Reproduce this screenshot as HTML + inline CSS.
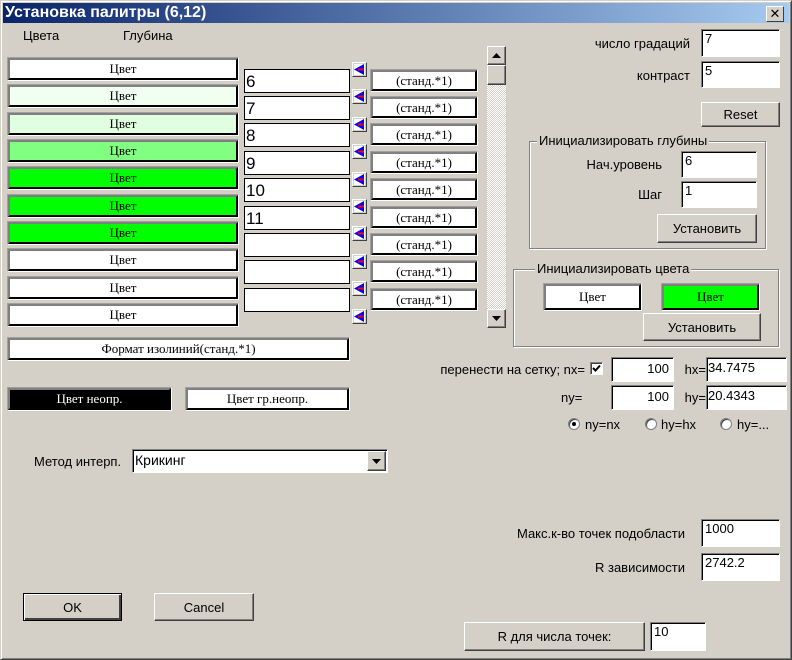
<!DOCTYPE html>
<html><head><meta charset="utf-8"><style>
*{box-sizing:border-box;margin:0;padding:0}
body{width:792px;height:660px;overflow:hidden;background:#d4d0c8;font-family:"Liberation Sans","DejaVu Sans",sans-serif;font-size:13px;color:#000;position:relative}
.a{position:absolute}
.win{position:absolute;left:0;top:0;width:792px;height:660px;border:1px solid;border-color:#d4d0c8 #404040 #404040 #d4d0c8;box-shadow:inset 1px 1px #fff,inset -1px -1px #808080}
.title{position:absolute;left:3px;top:3px;width:786px;height:20px;background:linear-gradient(90deg,#0a246a,#a6caf0);color:#fff;font-weight:bold;font-size:16px;line-height:20px;padding-left:2px}
.x{position:absolute;right:5px;top:3px;width:18px;height:16px;background:#d4d0c8;border:1px solid;border-color:#fff #404040 #404040 #fff;color:#000;font-size:13px;line-height:13px;text-align:center;font-weight:bold}
.cb{position:absolute;border:1px solid;border-color:#a0a0a0 #fff #fff #a0a0a0;font-family:"Liberation Serif","DejaVu Serif",serif;font-size:13px;text-align:center}
.cb div{width:100%;height:100%;border:2px solid;border-color:#808080 #000 #000 #808080;display:flex;align-items:center;justify-content:center}
.in{position:absolute;background:#fff;border:1px solid;border-color:#808080 #fff #fff #808080;box-shadow:inset 1px 1px #000;padding-left:3px;font-size:13px;line-height:18px}
.dp{position:absolute;background:#fff;border:1px solid #000;font-size:17px;line-height:24px;padding-left:1px;height:24px;width:106px;left:244px}
.bt{position:absolute;border:1px solid;border-color:#fff #404040 #404040 #fff;box-shadow:inset -1px -1px #808080;text-align:center;display:flex;align-items:center;justify-content:center}
.gb{position:absolute;border:1px solid #808080;box-shadow:1px 1px #fff,inset 1px 1px #fff}
.gl{position:absolute;background:#d4d0c8;padding:0 2px;font-size:13px}
.r{position:absolute;text-align:right}
.rad{position:absolute;width:12px;height:12px;border-radius:50%;background:#fff;border:1px solid #808080;box-shadow:inset 1px 1px #404040}
</style></head><body>
<div class="win"></div>
<div class="title">Установка палитры (6,12)<div class="x">✕</div></div>

<div class="a" style="left:23px;top:28px">Цвета</div>
<div class="a" style="left:123px;top:28px">Глубина</div>

<div class="cb" style="left:7px;top:57px;width:232px;height:24px"><div style="background:#fff">Цвет</div></div>
<div class="cb" style="left:7px;top:84px;width:232px;height:24px"><div style="background:#f0fff0">Цвет</div></div>
<div class="cb" style="left:7px;top:112px;width:232px;height:24px"><div style="background:#e0ffe0">Цвет</div></div>
<div class="cb" style="left:7px;top:139px;width:232px;height:24px"><div style="background:#80ff80">Цвет</div></div>
<div class="cb" style="left:7px;top:166px;width:232px;height:24px"><div style="background:#00ff00">Цвет</div></div>
<div class="cb" style="left:7px;top:194px;width:232px;height:24px"><div style="background:#00ff00">Цвет</div></div>
<div class="cb" style="left:7px;top:221px;width:232px;height:24px"><div style="background:#00ff00">Цвет</div></div>
<div class="cb" style="left:7px;top:248px;width:232px;height:24px"><div style="background:#fff">Цвет</div></div>
<div class="cb" style="left:7px;top:276px;width:232px;height:24px"><div style="background:#fff">Цвет</div></div>
<div class="cb" style="left:7px;top:303px;width:232px;height:24px"><div style="background:#fff">Цвет</div></div>

<div class="dp" style="top:69px">6</div>
<div class="dp" style="top:96px">7</div>
<div class="dp" style="top:123px">8</div>
<div class="dp" style="top:151px">9</div>
<div class="dp" style="top:178px">10</div>
<div class="dp" style="top:206px">11</div>
<div class="dp" style="top:233px"></div>
<div class="dp" style="top:260px"></div>
<div class="dp" style="top:288px"></div>

<svg class="a" style="left:352px;top:62px" width="16" height="270">
<g id="ar"><rect x="0.5" y="0.5" width="14" height="14" fill="#d4d0c8" stroke="#fff"/><path d="M14.5 0.5V14.5H0.5" fill="none" stroke="#404040"/><rect x="2" y="2" width="11" height="11" fill="#fff"/><path d="M2 7.5L12 2V13Z" fill="#0000ff"/><path d="M6 7.5H12" stroke="#f00" stroke-width="2"/></g>
<use href="#ar" y="27"/><use href="#ar" y="55"/><use href="#ar" y="82"/><use href="#ar" y="110"/><use href="#ar" y="137"/><use href="#ar" y="164"/><use href="#ar" y="192"/><use href="#ar" y="219"/><use href="#ar" y="247"/>
</svg>

<div class="cb" style="left:370px;top:69px;width:108px;height:23px"><div style="background:#fff">(станд.*1)</div></div>
<div class="cb" style="left:370px;top:96px;width:108px;height:23px"><div style="background:#fff">(станд.*1)</div></div>
<div class="cb" style="left:370px;top:123px;width:108px;height:23px"><div style="background:#fff">(станд.*1)</div></div>
<div class="cb" style="left:370px;top:151px;width:108px;height:23px"><div style="background:#fff">(станд.*1)</div></div>
<div class="cb" style="left:370px;top:178px;width:108px;height:23px"><div style="background:#fff">(станд.*1)</div></div>
<div class="cb" style="left:370px;top:206px;width:108px;height:23px"><div style="background:#fff">(станд.*1)</div></div>
<div class="cb" style="left:370px;top:233px;width:108px;height:23px"><div style="background:#fff">(станд.*1)</div></div>
<div class="cb" style="left:370px;top:260px;width:108px;height:23px"><div style="background:#fff">(станд.*1)</div></div>
<div class="cb" style="left:370px;top:288px;width:108px;height:23px"><div style="background:#fff">(станд.*1)</div></div>

<div class="a" style="left:487px;top:46px;width:19px;height:282px;background:repeating-conic-gradient(#fff 0 25%,#d4d0c8 0 50%) 0 0/2px 2px"></div>
<div class="bt" style="left:487px;top:46px;width:19px;height:19px;background:#d4d0c8"><svg width="9" height="5"><path d="M0 5L4.5 0L9 5Z"/></svg></div>
<div class="bt" style="left:487px;top:65px;width:19px;height:20px;background:#d4d0c8"></div>
<div class="bt" style="left:487px;top:309px;width:19px;height:19px;background:#d4d0c8"><svg width="9" height="5"><path d="M0 0L4.5 5L9 0Z"/></svg></div>

<div class="r" style="right:102px;top:36px">число градаций</div>
<div class="in" style="left:701px;top:29px;width:79px;height:28px">7</div>
<div class="r" style="right:102px;top:68px">контраст</div>
<div class="in" style="left:701px;top:61px;width:79px;height:27px">5</div>
<div class="bt" style="left:701px;top:102px;width:79px;height:25px">Reset</div>

<div class="gb" style="left:529px;top:141px;width:237px;height:108px"></div>
<div class="gl" style="left:537px;top:133px">Инициализировать глубины</div>
<div class="r" style="right:130px;top:157px">Нач.уровень</div>
<div class="in" style="left:681px;top:151px;width:76px;height:27px">6</div>
<div class="r" style="right:130px;top:187px">Шаг</div>
<div class="in" style="left:681px;top:181px;width:76px;height:27px">1</div>
<div class="bt" style="left:657px;top:214px;width:100px;height:29px">Установить</div>

<div class="gb" style="left:513px;top:269px;width:266px;height:78px"></div>
<div class="gl" style="left:535px;top:261px">Инициализировать цвета</div>
<div class="cb" style="left:543px;top:283px;width:99px;height:28px"><div style="background:#fff">Цвет</div></div>
<div class="cb" style="left:661px;top:283px;width:99px;height:28px"><div style="background:#00ff00">Цвет</div></div>
<div class="bt" style="left:643px;top:313px;width:118px;height:28px">Установить</div>

<div class="cb" style="left:7px;top:337px;width:343px;height:24px"><div style="background:#fff">Формат изолиний(станд.*1)</div></div>
<div class="cb" style="left:7px;top:387px;width:165px;height:24px"><div style="background:#000;color:#fff">Цвет неопр.</div></div>
<div class="cb" style="left:185px;top:387px;width:165px;height:24px"><div style="background:#fff">Цвет гр.неопр.</div></div>

<div class="r" style="right:207px;top:362px">перенести на сетку; nx=</div>
<div class="a" style="left:590px;top:362px;width:13px;height:13px;background:#fff;border:1px solid;border-color:#808080 #fff #fff #808080;box-shadow:inset 1px 1px #404040"><svg width="11" height="11" style="position:absolute;left:0;top:0"><path d="M2 5L4.5 7.5L9 2.5" fill="none" stroke="#000" stroke-width="2"/></svg></div>
<div class="in" style="left:611px;top:357px;width:63px;height:25px;text-align:right;padding-right:4px;line-height:22px">100</div>
<div class="r" style="right:86px;top:362px">hx=</div>
<div class="in" style="left:706px;top:357px;width:81px;height:25px;padding-left:1px;line-height:20px">34.7475</div>
<div class="a" style="left:561px;top:390px">ny=</div>
<div class="in" style="left:611px;top:385px;width:63px;height:25px;text-align:right;padding-right:4px;line-height:22px">100</div>
<div class="r" style="right:86px;top:390px">hy=</div>
<div class="in" style="left:706px;top:385px;width:81px;height:25px;padding-left:1px;line-height:20px">20.4343</div>
<div class="rad" style="left:568px;top:418px"><div style="position:absolute;left:3px;top:3px;width:4px;height:4px;background:#000;border-radius:50%"></div></div>
<div class="a" style="left:585px;top:417px">ny=nx</div>
<div class="rad" style="left:645px;top:418px"></div>
<div class="a" style="left:661px;top:417px">hy=hx</div>
<div class="rad" style="left:720px;top:418px"></div>
<div class="a" style="left:737px;top:417px">hy=...</div>

<div class="a" style="left:34px;top:454px">Метод интерп.</div>
<div class="in" style="left:132px;top:449px;width:256px;height:24px;font-size:14px;padding-left:2px;line-height:21px">Крикинг</div>
<div class="bt" style="left:367px;top:451px;width:19px;height:20px;background:#d4d0c8"><svg width="9" height="5"><path d="M0 0L4.5 5L9 0Z"/></svg></div>

<div class="r" style="right:107px;top:526px">Макс.к-во точек подобласти</div>
<div class="in" style="left:701px;top:519px;width:79px;height:28px">1000</div>
<div class="r" style="right:107px;top:560px">R зависимости</div>
<div class="in" style="left:701px;top:553px;width:79px;height:28px">2742.2</div>

<div class="bt" style="left:23px;top:593px;width:99px;height:28px;border-color:#000;box-shadow:inset 1px 1px #fff,inset -2px -2px #404040">OK</div>
<div class="bt" style="left:154px;top:593px;width:100px;height:28px">Cancel</div>
<div class="bt" style="left:464px;top:622px;width:181px;height:29px">R для числа точек:</div>
<div class="in" style="left:650px;top:622px;width:56px;height:29px">10</div>
</body></html>
